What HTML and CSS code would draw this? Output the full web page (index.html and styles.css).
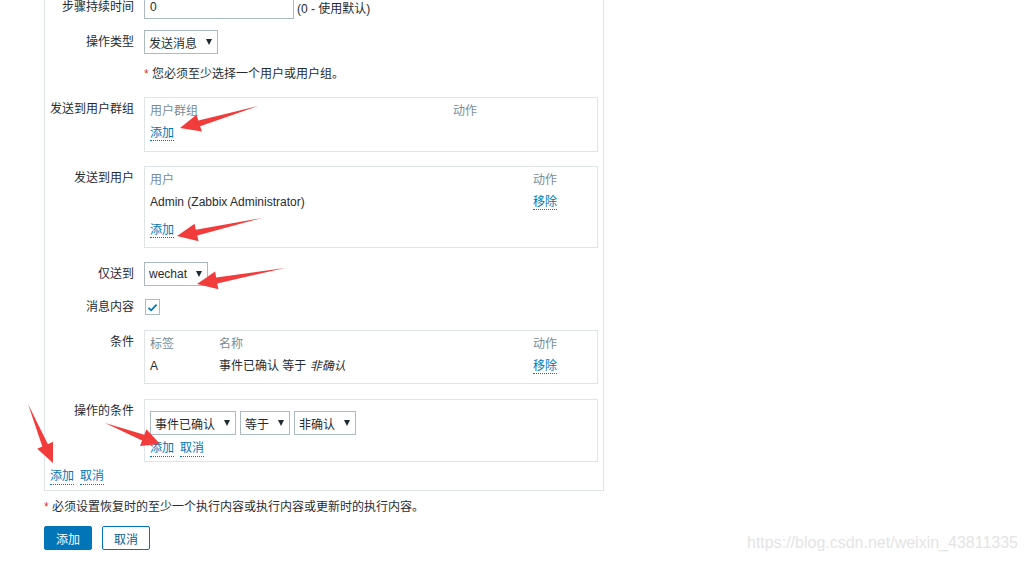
FILE: index.html
```html
<!DOCTYPE html>
<html lang="zh">
<head>
<meta charset="utf-8">
<title>操作</title>
<link rel="stylesheet" href="styles.css">
</head>
<body>
<div class="page">
  <div class="panel">
    <div class="form">
      <div class="row r1">
        <div class="lbl">步骤持续时间</div>
        <div class="ctl inline"><span class="input">0</span><span class="hint">(0 - 使用默认)</span></div>
      </div>
      <div class="row">
        <div class="lbl">操作类型</div>
        <div class="ctl"><span class="sel">发送消息<span class="caret"></span></span></div>
      </div>
      <div class="row r3">
        <div class="lbl"></div>
        <div class="ctl note-line"><span class="req">*</span> 您必须至少选择一个用户或用户组。</div>
      </div>
      <div class="row r4">
        <div class="lbl">发送到用户群组</div>
        <div class="ctl">
          <div class="box">
            <div class="trow cols-grp head"><span>用户群组</span><span>动作</span></div>
            <div class="trow grp-add"><a class="link" href="#">添加</a></div>
          </div>
        </div>
      </div>
      <div class="row">
        <div class="lbl">发送到用户</div>
        <div class="ctl">
          <div class="box">
            <div class="trow cols-usr head"><span>用户</span><span>动作</span></div>
            <div class="trow cols-usr"><span>Admin (Zabbix Administrator)</span><span><a class="link" href="#">移除</a></span></div>
            <div class="trow add-row"><a class="link" href="#">添加</a></div>
          </div>
        </div>
      </div>
      <div class="row">
        <div class="lbl">仅送到</div>
        <div class="ctl"><span class="sel">wechat<span class="caret"></span></span></div>
      </div>
      <div class="row r7">
        <div class="lbl">消息内容</div>
        <div class="ctl">
          <span class="check"><svg width="13" height="13" viewBox="0 0 13 13"><path d="M2.5 6.8 L5.2 9.3 L10.6 3.6" fill="none" stroke="#0275b8" stroke-width="1.8"/></svg></span>
        </div>
      </div>
      <div class="row r8">
        <div class="lbl">条件</div>
        <div class="ctl">
          <div class="box">
            <div class="trow cols-cond head"><span>标签</span><span>名称</span><span>动作</span></div>
            <div class="trow cols-cond"><span>A</span><span>事件已确认 等于 <em>非确认</em></span><span><a class="link" href="#">移除</a></span></div>
          </div>
        </div>
      </div>
      <div class="row r9">
        <div class="lbl">操作的条件</div>
        <div class="ctl">
          <div class="box box-edit">
            <div class="sel-row">
              <span class="sel">事件已确认<span class="caret"></span></span>
              <span class="sel">等于<span class="caret"></span></span>
              <span class="sel">非确认<span class="caret"></span></span>
            </div>
            <div class="links"><a class="link" href="#">添加</a><a class="link" href="#">取消</a></div>
          </div>
        </div>
      </div>
    </div>
    <div class="links panel-links"><a class="link" href="#">添加</a><a class="link" href="#">取消</a></div>
  </div>
  <p class="note"><span class="req">*</span> 必须设置恢复时的至少一个执行内容或执行内容或更新时的执行内容。</p>
  <div class="buttons">
    <button class="btn" type="button">添加</button>
    <button class="btn btn-alt" type="button">取消</button>
  </div>
</div>

<svg class="annot" width="1027" height="562" viewBox="0 0 1027 562">
  <g fill="#f23c3c">
    <polygon points="258,106 198.4,120.4 196.4,114.7 180,128 202,131.6 200.1,126.2"/>
    <polygon points="262,218 195.8,229.7 194.6,223.8 177,236 198.6,241.2 197.2,235.5"/>
    <polygon points="285,268 216.2,277.5 215.1,271.5 197,284 218.4,289.3 217.2,283.4"/>
    <polygon points="105,423 142.1,440.4 140,446 160,444 146.4,429.2 144.3,434.8"/>
    <polygon points="28,404 42.3,446.5 37.2,448.8 53,463 53,441.8 47.9,444.3"/>
  </g>
</svg>
<div class="watermark">https://blog.csdn.net/weixin_43811335</div>
</body>
</html>
```

FILE: styles.css
```css
html, body {
  margin: 0;
  padding: 0;
  background: #ffffff;
}

body {
  font-family: "Liberation Sans", "Noto Sans CJK SC", sans-serif;
  font-size: 12px;
  color: #1f2c33;
  width: 1027px;
  height: 562px;
  overflow: hidden;
  position: relative;
}

.page {
  padding-left: 44px;
}

.panel {
  width: 560px;
  box-sizing: border-box;
  border: 1px solid #dfe4e7;
  margin-top: -16px;
  padding: 10px 4px 5px 0;
}

.form {
  display: flex;
  flex-direction: column;
  gap: 14px;
}

.row {
  display: grid;
  grid-template-columns: 89px 454px;
  column-gap: 10px;
  align-items: start;
}

.r1 { margin-bottom: -3px; }
.r3 { margin-top: -1px; }
.r4 { margin-top: 2px; }
.r7 { margin-top: -1px; }
.r8 { margin-top: 1px; }
.r9 { margin-top: 1px; }

.lbl {
  text-align: right;
  line-height: 24px;
  white-space: nowrap;
}

.r7 .lbl { line-height: 16px; }

.ctl.inline {
  display: flex;
  align-items: center;
}

.input {
  display: inline-flex;
  align-items: center;
  box-sizing: border-box;
  width: 150px;
  height: 24px;
  border: 1px solid #acbbc2;
  padding-left: 5px;
  background: #fff;
}

.hint {
  margin-left: 3px;
}

.sel {
  display: inline-flex;
  align-items: center;
  box-sizing: border-box;
  height: 24px;
  border: 1px solid #acbbc2;
  padding: 0 5px 0 4px;
  gap: 9px;
  background: #fff;
  white-space: nowrap;
}

.caret {
  width: 0;
  height: 0;
  border-left: 3px solid transparent;
  border-right: 3px solid transparent;
  border-top: 6px solid #1f2c33;
}

.note-line {
  line-height: 14px;
}

.req {
  color: #e33734;
}

.box {
  border: 1px solid #dfe4e7;
  padding: 2px 5px 6px;
}

.trow {
  line-height: 22px;
  height: 22px;
}

.head {
  color: #768d99;
}

.cols-grp {
  display: grid;
  grid-template-columns: 303px 1fr;
}

.cols-usr {
  display: grid;
  grid-template-columns: 1fr 59px;
}

.cols-cond {
  display: grid;
  grid-template-columns: 69px 1fr 59px;
}

.grp-add {
  height: 23px;
}

.add-row {
  margin-top: 6px;
}

.link {
  color: #0275b8;
  text-decoration: none;
  border-bottom: 1px dotted #0275b8;
  line-height: 14px;
  display: inline-block;
}

em {
  font-style: italic;
}

.check {
  display: flex;
  align-items: center;
  justify-content: center;
  box-sizing: border-box;
  width: 15px;
  height: 16px;
  margin-left: 1px;
  border: 1px solid #acbbc2;
  background: #fff;
}

.box-edit {
  padding: 11px 5px 4px;
}

.sel-row {
  display: flex;
  gap: 4px;
}

.links {
  display: flex;
  gap: 6px;
  margin-top: 6px;
  line-height: 16px;
  height: 16px;
}

.panel-links {
  margin-top: 7px;
  padding-left: 5px;
}

.note {
  margin: 8px 0 0;
  line-height: 16px;
}

.buttons {
  display: flex;
  gap: 10px;
  margin-top: 11px;
}

.btn {
  box-sizing: border-box;
  width: 48px;
  height: 24px;
  border: 1px solid #0275b8;
  border-radius: 2px;
  background: #0275b8;
  color: #ffffff;
  font-family: "Liberation Sans", "Noto Sans CJK SC", sans-serif;
  font-size: 12px;
  padding: 0;
}

.btn-alt {
  background: #ffffff;
  color: #0b5b8f;
}

.annot {
  position: absolute;
  left: 0;
  top: 0;
  pointer-events: none;
}

.watermark {
  position: absolute;
  left: 747px;
  top: 533px;
  font-family: "Liberation Sans", sans-serif;
  font-size: 16px;
  line-height: 20px;
  color: #e4e4e4;
  white-space: nowrap;
}
```
